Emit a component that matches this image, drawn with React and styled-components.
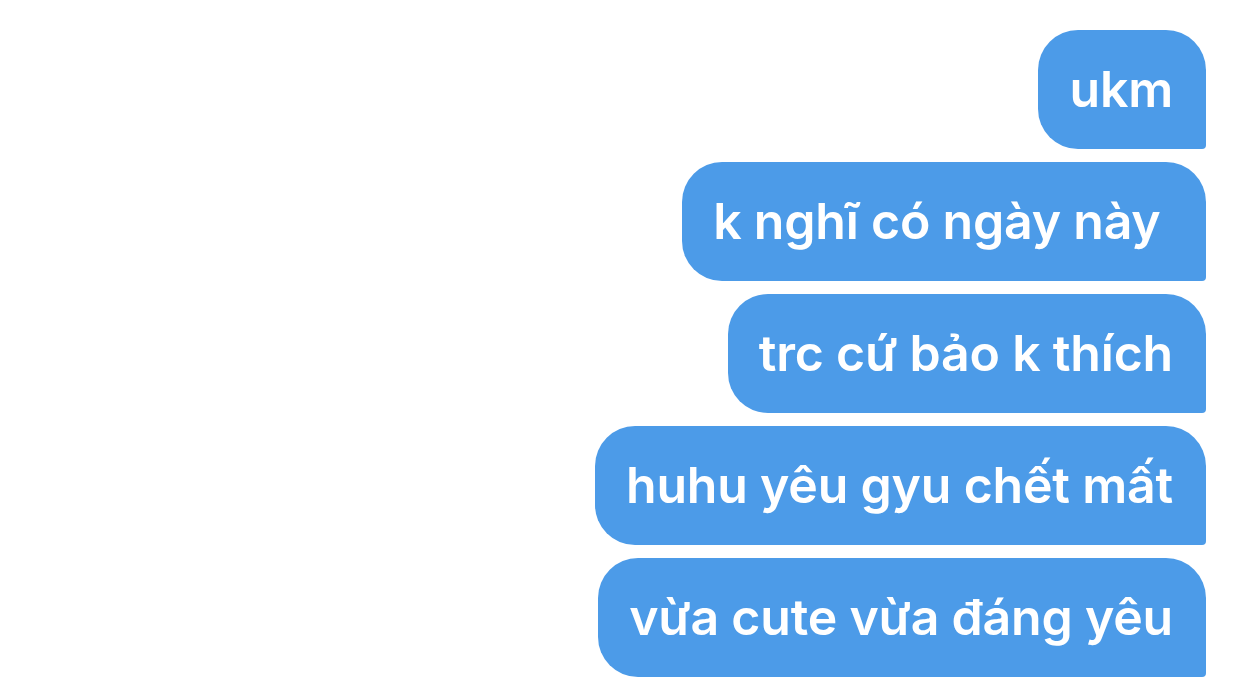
import styled, { createGlobalStyle } from "styled-components"

var messages = [
  "ukm",
  "k nghĩ có ngày này\u00a0",
  "trc cứ bảo k thích",
  "huhu yêu gyu chết mất",
  "vừa cute vừa đáng yêu",
]

var Global = createGlobalStyle`
html, body {
  margin: 0;
  background: #ffffff;
}
`

var App = () => (
  <Thread>
    <Global />
    {messages.map((text, i) => (
      <Bubble key={i}>{text}</Bubble>
    ))}
  </Thread>
)

var Thread = styled.div`
display: flex;
flex-direction: column;
align-items: flex-end;
gap: 13px;
padding: 30px 36px 0 0;
height: 698px;
box-sizing: border-box;
background: #ffffff;
`

var Bubble = styled.div`
display: flex;
align-items: center;
height: 119px;
box-sizing: border-box;
padding: 0 33px 2px 31px;
background: #4c9be8;
color: #ffffff;
font-family: Inter, "Noto Sans", sans-serif;
font-weight: 600;
font-size: 50px;
letter-spacing: -0.2px;
white-space: pre;
border-radius: 40px 40px 4px 40px;
`

export default App
